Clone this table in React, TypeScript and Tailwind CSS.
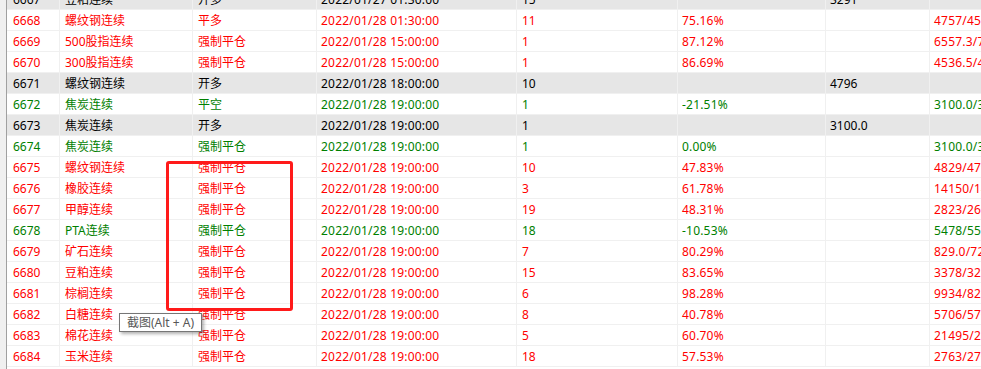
import React from 'react';

type Row = {
  id: number;
  name: string;
  action: string;
  time: string;
  qty: string;
  pct: string;
  price: string;
  last: string;
  tone: 'red' | 'green' | 'open';
};

const rows: Row[] = [
  { id: 6667, name: '豆粕连续', action: '开多', time: '2022/01/27 01:30:00', qty: '15', pct: '', price: '3291', last: '', tone: 'open' },
  { id: 6668, name: '螺纹钢连续', action: '平多', time: '2022/01/28 01:30:00', qty: '11', pct: '75.16%', price: '', last: '4757/4539', tone: 'red' },
  { id: 6669, name: '500股指连续', action: '强制平仓', time: '2022/01/28 15:00:00', qty: '1', pct: '87.12%', price: '', last: '6557.3/7008', tone: 'red' },
  { id: 6670, name: '300股指连续', action: '强制平仓', time: '2022/01/28 15:00:00', qty: '1', pct: '86.69%', price: '', last: '4536.5/4800', tone: 'red' },
  { id: 6671, name: '螺纹钢连续', action: '开多', time: '2022/01/28 18:00:00', qty: '10', pct: '', price: '4796', last: '', tone: 'open' },
  { id: 6672, name: '焦炭连续', action: '平空', time: '2022/01/28 19:00:00', qty: '1', pct: '-21.51%', price: '', last: '3100.0/3200', tone: 'green' },
  { id: 6673, name: '焦炭连续', action: '开多', time: '2022/01/28 19:00:00', qty: '1', pct: '', price: '3100.0', last: '', tone: 'open' },
  { id: 6674, name: '焦炭连续', action: '强制平仓', time: '2022/01/28 19:00:00', qty: '1', pct: '0.00%', price: '', last: '3100.0/3100', tone: 'green' },
  { id: 6675, name: '螺纹钢连续', action: '强制平仓', time: '2022/01/28 19:00:00', qty: '10', pct: '47.83%', price: '', last: '4829/4796', tone: 'red' },
  { id: 6676, name: '橡胶连续', action: '强制平仓', time: '2022/01/28 19:00:00', qty: '3', pct: '61.78%', price: '', last: '14150/1400', tone: 'red' },
  { id: 6677, name: '甲醇连续', action: '强制平仓', time: '2022/01/28 19:00:00', qty: '19', pct: '48.31%', price: '', last: '2823/2690', tone: 'red' },
  { id: 6678, name: 'PTA连续', action: '强制平仓', time: '2022/01/28 19:00:00', qty: '18', pct: '-10.53%', price: '', last: '5478/5500', tone: 'green' },
  { id: 6679, name: '矿石连续', action: '强制平仓', time: '2022/01/28 19:00:00', qty: '7', pct: '80.29%', price: '', last: '829.0/720', tone: 'red' },
  { id: 6680, name: '豆粕连续', action: '强制平仓', time: '2022/01/28 19:00:00', qty: '15', pct: '83.65%', price: '', last: '3378/3291', tone: 'red' },
  { id: 6681, name: '棕榈连续', action: '强制平仓', time: '2022/01/28 19:00:00', qty: '6', pct: '98.28%', price: '', last: '9934/8200', tone: 'red' },
  { id: 6682, name: '白糖连续', action: '强制平仓', time: '2022/01/28 19:00:00', qty: '8', pct: '40.78%', price: '', last: '5706/5700', tone: 'red' },
  { id: 6683, name: '棉花连续', action: '强制平仓', time: '2022/01/28 19:00:00', qty: '5', pct: '60.70%', price: '', last: '21495/2100', tone: 'red' },
  { id: 6684, name: '玉米连续', action: '强制平仓', time: '2022/01/28 19:00:00', qty: '18', pct: '57.53%', price: '', last: '2763/2700', tone: 'red' },
];

const toneStyle = {
  red: 'bg-white text-[#ff0000]',
  green: 'bg-white text-[#008000]',
  open: 'bg-[#e6e6e6] text-[#000000]',
};

// column widths include the 1px right grid line
const cell = 'h-[20px] pt-[2px] leading-[18px] border-r border-[#f0f0f0] whitespace-nowrap overflow-hidden';

const TradeRow = ({ row }: { row: Row }) => (
  <div className={`flex border-b border-[#f0f0f0] ${toneStyle[row.tone]}`}>
    <div className={`${cell} w-[53px] pl-[6px]`}>{row.id}</div>
    <div className={`${cell} w-[133px] pl-[5px]`}>{row.name}</div>
    <div className={`${cell} w-[124px] pl-[5px]`}>{row.action}</div>
    <div className={`${cell} w-[200px] pl-[4px] tracking-[0.2px]`}>{row.time}</div>
    <div className={`${cell} w-[161px] pl-[5px]`}>{row.qty}</div>
    <div className={`${cell} w-[148px] pl-[4px] tracking-[0.2px]`}>{row.pct}</div>
    <div className={`${cell} w-[104px] pl-[4px]`}>{row.price}</div>
    <div className={`${cell} w-[120px] pl-[4px] tracking-[0.2px]`}>{row.last}</div>
  </div>
);

export default function App() {
  return (
    <div
      className="relative w-[981px] h-[369px] overflow-hidden bg-white text-[12px]"
      style={{ fontFamily: '"Noto Sans", "Noto Sans CJK SC", sans-serif' }}
    >
      <div className="flex h-full">
        <div className="w-[6px] shrink-0 bg-[#f0f0f0]" />
        <div className="shrink-0 border-l border-[#a0a0a0] mt-[-11px]">
          {rows.map((r) => (
            <TradeRow key={r.id} row={r} />
          ))}
          <div className="h-[21px] bg-white border-b border-[#f0f0f0]" />
        </div>
      </div>

      {/* 红色标注框 */}
      <div className="absolute left-[166px] top-[161px] w-[127px] h-[150px] border-[3px] border-[#ff1a1a] rounded-[3px]" />

      {/* 截图提示 */}
      <div className="absolute left-[119px] top-[313px] h-[19px] w-[83px] flex items-center justify-center bg-white border border-[#767676] text-[#575757] text-[12px] leading-none shadow-[2px_2px_3px_rgba(0,0,0,0.3)]">
        截图(Alt + A)
      </div>
    </div>
  );
}
